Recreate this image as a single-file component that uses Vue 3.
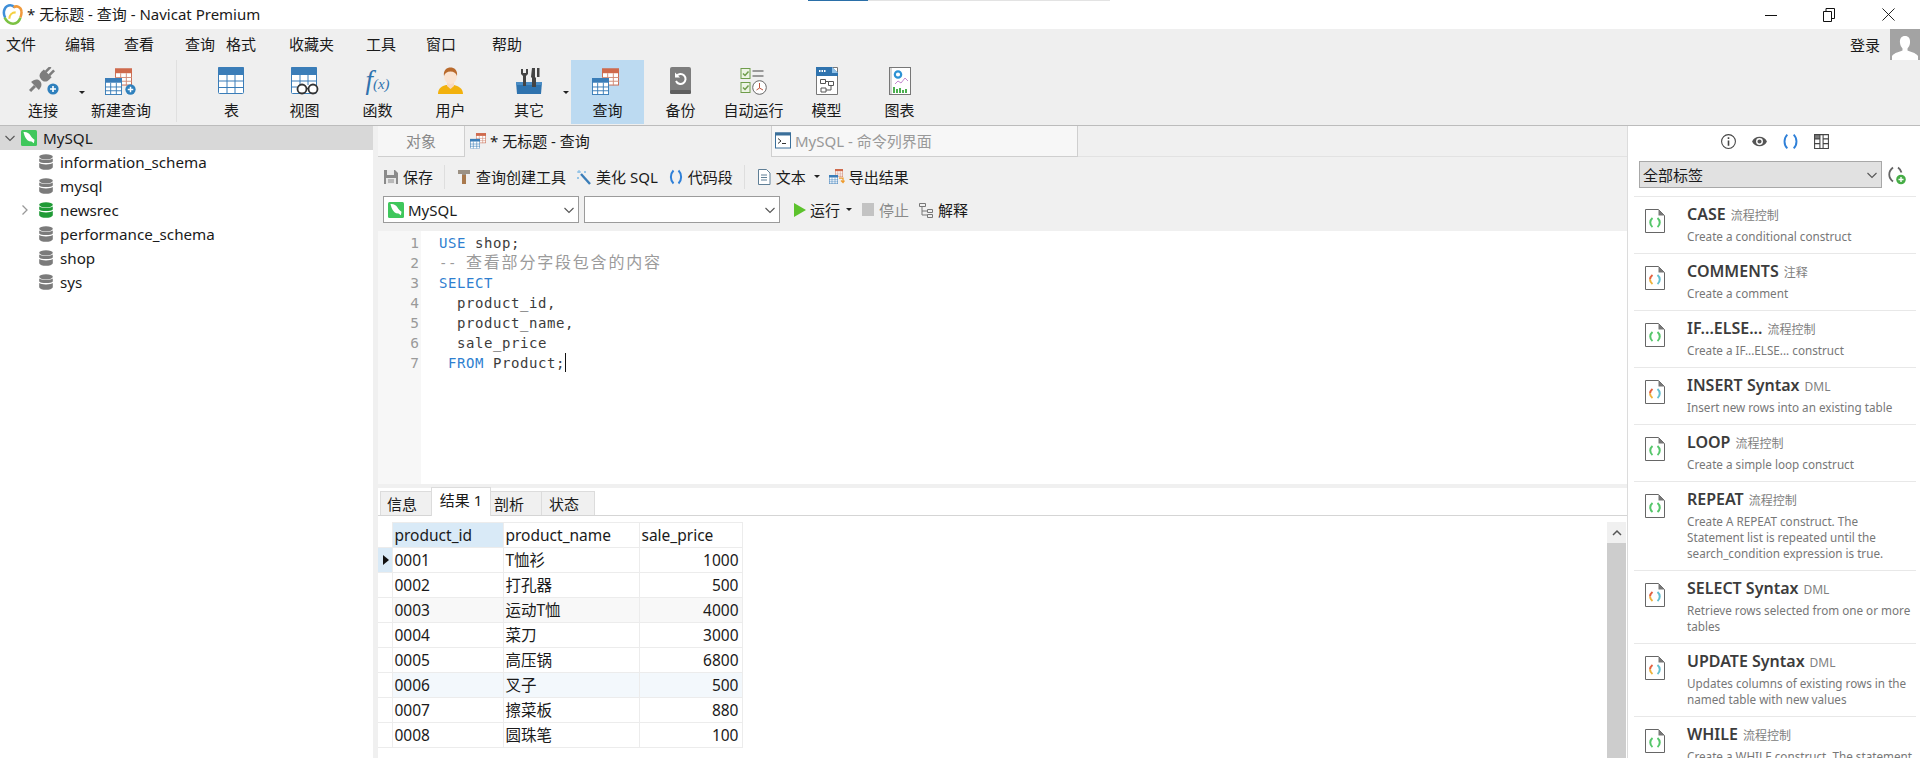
<template>
  <div class="app">
    <!-- shared icons -->
    <svg class="defs" width="0" height="0">
      <symbol id="grid-blue" viewBox="0 0 18 18">
        <rect x=".5" y=".5" width="17" height="17" fill="#fff" stroke="#3a7db8" />
        <rect width="18" height="5" fill="#3a7db8" />
        <path d="M6 5v13M12 5v13M0 9.500h18M0 13.500h18" stroke="#3a7db8" fill="none" />
      </symbol>
      <symbol id="grid-red" viewBox="0 0 18 18">
        <rect x=".5" y=".5" width="17" height="17" fill="#fff" stroke="#c9694f" />
        <rect width="18" height="5" fill="#cf6a4c" />
        <path d="M6 5v13M12 5v13M0 9.500h18M0 13.500h18" stroke="#d08a76" fill="none" />
      </symbol>
      <symbol id="plus" viewBox="0 0 12 12">
        <circle cx="6" cy="6" r="5.600" fill="#2f80bd" />
        <path d="M6 3v6M3 6h6" stroke="#fff" stroke-width="1.600" />
      </symbol>
      <symbol id="db" viewBox="0 0 14 16">
        <ellipse cx="7" cy="2.800" rx="6.800" ry="2.600" />
        <path d="M.2 4.600C1.500 6.400 12.500 6.400 13.800 4.600V7.400C12.500 9.600 1.500 9.600.2 7.400ZM.2 9C1.500 10.900 12.500 10.900 13.800 9V13.200C13 16.600 1 16.600.2 13.200Z" />
      </symbol>
      <symbol id="dolphin" viewBox="0 0 16 16">
        <rect width="16" height="16" rx="1.500" fill="#3fc75c" />
        <path d="M2.500 2c3-.4 5.500.8 7 3.400 1 1.800 2 3 4 4.400l-.6 3.400-2.400-1.600-2.300-.4C6 10.400 3.500 7 2.500 2Z" fill="#fff" />
      </symbol>
      <symbol id="snip-green" viewBox="0 0 20 24">
        <path d="M.5.500h13l6 6v17H.5Z" fill="#fff" stroke="#666" />
        <path d="M13.500.5v6h6Z" fill="#777" />
        <path d="M7.500 9c-3 2.500-3 6.500 0 9" fill="none" stroke="#55c66a" stroke-width="2" />
        <path d="M12.500 9c3 2.500 3 6.500 0 9" fill="none" stroke="#55c66a" stroke-width="2" />
      </symbol>
      <symbol id="snip-color" viewBox="0 0 20 24">
        <path d="M.5.500h13l6 6v17H.5Z" fill="#fff" stroke="#666" />
        <path d="M13.500.5v6h6Z" fill="#777" />
        <path d="M7.500 9C5.800 10.400 5 12 5 13.500" fill="none" stroke="#e2603f" stroke-width="2" />
        <path d="M5 13.500c0 1.600.8 3.200 2.500 4.500" fill="none" stroke="#eeb23a" stroke-width="2" />
        <path d="M12.500 9c3 2.500 3 6.500 0 9" fill="none" stroke="#62bfd0" stroke-width="2" />
      </symbol>
      <symbol id="conn" viewBox="0 0 32 28">
        <g transform="rotate(45 14 13)" fill="#7d7d7d">
          <rect x="10.200" y="-3" width="2.600" height="7" />
          <rect x="15.200" y="-3" width="2.600" height="7" />
          <path d="M8.500 3.500h11V7c0 3.500-2 5.500-5.500 5.500S8.500 10.500 8.500 7Z" />
          <path d="M8.500 21.500c0-4 2-7 5.500-7s5.500 3 5.500 7Z" />
          <rect x="12.500" y="21.500" width="3" height="7" />
        </g>
        <use href="#plus" x="20" y="16" width="12" height="12" />
      </symbol>
      <symbol id="newq" viewBox="0 0 32 28">
        <use href="#grid-red" x="10" y="0" width="17" height="20" />
        <use href="#grid-blue" x="0" y="11" width="17" height="17" />
        <use href="#plus" x="20" y="17" width="11" height="11" />
      </symbol>
      <symbol id="query" viewBox="0 0 32 28">
        <use href="#grid-red" x="10" y="0" width="17" height="20" />
        <use href="#grid-blue" x="0" y="11" width="17" height="17" />
      </symbol>
      <symbol id="table" viewBox="0 0 28 28">
        <rect x=".5" y=".5" width="25" height="26" rx="1" fill="#fff" stroke="#3a7db8" />
        <rect width="26" height="8" rx="1" fill="#3a7db8" />
        <path d="M9 8v19M17 8v19M0 14h26M0 20.500h26" stroke="#3a7db8" fill="none" />
      </symbol>
      <symbol id="view" viewBox="0 0 28 28">
        <rect x=".5" y=".5" width="25" height="26" rx="1" fill="#fff" stroke="#3a7db8" />
        <rect width="26" height="8" rx="1" fill="#3a7db8" />
        <path d="M9 8v10M17 8v10M0 14h26M1 20h5" stroke="#3a7db8" fill="none" />
        <circle cx="11" cy="22" r="4.500" fill="#fff" stroke="#333" stroke-width="1.800" />
        <circle cx="22" cy="22" r="4.500" fill="#fff" stroke="#333" stroke-width="1.800" />
        <path d="M15 21.500h3" stroke="#333" stroke-width="1.500" />
      </symbol>
      <symbol id="user" viewBox="0 0 28 28">
        <path d="M1 27c0-6 4-8 8-9h8c4 1 9 3 9 9Z" fill="#f2b10d" />
        <path d="M10 14h7v5l-3.500 3L10 19Z" fill="#f8d9c2" />
        <ellipse cx="13.500" cy="9" rx="6.500" ry="8" fill="#fae3d1" />
        <path d="M7 9C6 3 10 .5 13.500 .5S21 3 20 9c-1-3-3-4.500-6.500-4.500S8 6 7 9Z" fill="#b96a2c" />
      </symbol>
      <symbol id="tools" viewBox="0 0 28 28">
        <path d="M1 15h26l-1 12H2Z" fill="#2f73ae" />
        <path d="M1 15h26v3H1Z" fill="#4a8cc4" />
        <path d="M6 2v5l2 2v10h3V9l2-2V2h-2v4H8V2Z" fill="#444" />
        <path d="M17 1h3v9l1 1v9h-4v-9l-1-1ZM22 1h2.500v9H22Z" fill="#444" />
      </symbol>
      <symbol id="backup" viewBox="0 0 28 28">
        <rect x="3" width="21" height="27" rx="2" fill="#7d7d7d" />
        <rect x="3" y="23" width="21" height="4" rx="1.500" fill="#5f5f5f" />
        <path d="M9.500 9a5 5 0 1 1-.5 5" fill="none" stroke="#fff" stroke-width="2" />
        <path d="M8 5.500v5h5Z" fill="#fff" />
      </symbol>
      <symbol id="auto" viewBox="0 0 28 28">
        <rect x="1" y="1.500" width="9" height="10" fill="#edf4e5" stroke="#6f9d4b" />
        <rect x="1" y="15.500" width="9" height="10" fill="#edf4e5" stroke="#6f9d4b" />
        <path d="M3 6.500l2 2 3.500-4M3 20.500l2 2 3.500-4" fill="none" stroke="#6f9d4b" stroke-width="1.500" />
        <path d="M12.500 4h11M12.500 9h11" stroke="#999" stroke-width="2" />
        <circle cx="19.500" cy="20.500" r="6.800" fill="#fff" stroke="#666" />
        <path d="M19.500 16v5l3.500 2M19.500 21l-3 2" fill="none" stroke="#c0543c" />
      </symbol>
      <symbol id="model" viewBox="0 0 28 28">
        <path d="M3.500.5h21v27h-21Z" fill="#fff" stroke="#777" />
        <path d="M3 0h16l6 6v3H3Z" fill="#2f73ae" />
        <path d="M19 0l6 6h-6Z" fill="#8fc1e8" />
        <path d="M6 4h1.500M8.500 4H10M11 4h1.500" stroke="#fff" stroke-width="2" />
        <path d="M7.500 12.500h5v4h-5ZM15.500 14.500h5v4h-5ZM8 21h5v4H8ZM12.500 14.500h3M18 18.500v4.500h-5" fill="none" stroke="#555" />
      </symbol>
      <symbol id="chart" viewBox="0 0 28 28">
        <rect x="3.500" y=".5" width="21" height="27" fill="#fff" stroke="#777" />
        <path d="M5 1v26" stroke="#aaa" />
        <circle cx="12" cy="7.500" r="3.200" fill="none" stroke="#2d93d5" stroke-width="2.200" />
        <path d="M9 17l3-3 3 2 4-5 3 3" fill="none" stroke="#c587cf" />
        <path d="M8 20v6M11 22v4M14 21v5M17 23v3M20 22v4" stroke="#4caf50" stroke-width="2" />
      </symbol>
      <symbol id="chev" viewBox="0 0 12 12">
        <path d="M1.500 4l4.500 4.500L10.500 4" fill="none" stroke="#555" stroke-width="1.100" />
      </symbol>
    </svg>

    <!-- title bar -->
    <header class="titlebar">
      <div class="loader"><i></i></div>
      <svg class="logo" viewBox="0 0 20 20">
        <path d="M3 13C0 7 3 1.300 8 1.300c1.800 0 3 .7 4 2" fill="none" stroke="#3f8fd8" stroke-width="2.400" />
        <path d="M11 3.300c3-2.300 7-.5 7.500 3.500.3 2-.2 4.200-1 6" fill="none" stroke="#f09a3c" stroke-width="2.400" />
        <path d="M2.500 13c2 4 5 5.700 8 5.700s6-2.200 7-5.700" fill="none" stroke="#7cc243" stroke-width="2.400" />
        <path d="M7 14c0-3.500 2.500-6 6-6" fill="none" stroke="#f5d040" stroke-width="2" />
      </svg>
      <span class="title">* 无标题 - 查询 - Navicat Premium</span>
      <div class="winbtns">
        <svg class="win win-min" viewBox="0 0 12 12"><path d="M0 6.500h12" stroke="#111" /></svg>
        <svg class="win win-max" viewBox="0 0 12 14"><path d="M.5 3.500h8v10h-8ZM3 3.500V.5h8.500v10H8.500" fill="none" stroke="#111" /></svg>
        <svg class="win win-close" viewBox="0 0 14 14"><path d="M.5.500l13 13M13.500.5l-13 13" stroke="#111" /></svg>
      </div>
    </header>

    <!-- menu -->
    <nav class="menubar">
      <span v-for="m in menus" :key="m.t" class="menu" :style="{ width: m.w + 'px' }">{{ m.t }}</span>
      <span class="login">登录</span>
      <svg class="avatar" viewBox="0 0 30 31">
        <rect width="30" height="31" fill="#a3a3a3" />
        <path d="M15 7c3.500 0 5.500 2.500 5 7-.3 2.500-1.300 4-2.500 5.500v2c3 1.500 8 2 10.500 5.500v4H2v-4c2.500-3.500 7.500-4 10.500-5.500v-2C11.300 18 10.300 16.500 10 14c-.5-4.500 1.500-7 5-7Z" fill="#fff" />
      </svg>
    </nav>

    <!-- main toolbar -->
    <div class="toolbar">
      <template v-for="b in tools" :key="b.t">
        <div class="tb-btn" :class="{ active: b.active }" :style="{ width: b.w + 'px' }">
          <span v-if="b.icon === 'fx'" class="fx">f<em>(x)</em></span>
          <svg v-else class="tb-icon" :class="{ wide: b.wide }" :viewBox="b.wide ? '0 0 32 28' : '0 0 28 28'"><use :href="'#' + b.icon" /></svg>
          <span class="tb-label">{{ b.t }}</span>
          <i v-if="b.caret" class="caret tb-caret" :style="{ right: b.caret + 'px' }"></i>
        </div>
        <div v-if="b.sep" class="tb-sep"></div>
      </template>
    </div>

    <div class="body">
      <!-- connection tree -->
      <aside class="tree">
        <div class="tree-row conn">
          <svg class="tree-arrow" viewBox="0 0 12 12"><use href="#chev" /></svg>
          <svg class="tree-conn" viewBox="0 0 16 16"><use href="#dolphin" /></svg>
          <span>MySQL</span>
        </div>
        <div v-for="d in databases" :key="d.name" class="tree-row">
          <svg v-if="d.open" class="tree-more" viewBox="0 0 8 12"><path d="M1.500 1.500L6 6l-4.500 4.500" fill="none" stroke="#999" stroke-width="1.300" /></svg>
          <svg class="tree-db" :class="{ open: d.open }" viewBox="0 0 14 16"><use href="#db" /></svg>
          <span>{{ d.name }}</span>
        </div>
      </aside>

      <main class="main">
        <div class="tabs">
          <div class="tab tab-obj">对象</div>
          <div class="tab tab-active">
            <svg class="tab-icon" viewBox="0 0 27 28"><use href="#query" width="32" height="28" /></svg>
            <span>* 无标题 - 查询</span>
          </div>
          <div class="tab tab-cmd">
            <svg class="tab-icon" viewBox="0 0 16 16">
              <rect x=".5" y=".5" width="15" height="15" fill="#fff" stroke="#3a6f9a" />
              <rect width="16" height="3" fill="#3a6f9a" />
              <path d="M3 6l3 2.500L3 11M7 11h4" fill="none" stroke="#333" />
            </svg>
            <span>MySQL - 命令列界面</span>
          </div>
          <div class="tab-rest"></div>
        </div>

        <div class="qbar">
          <span class="tool">
            <svg class="ico" viewBox="0 0 16 16"><path d="M1 1h11l3 3v11H1Z" fill="#8a8a8a" /><path d="M4 1h7v5H4Z" fill="#e9e9e9" /><path d="M3 9h10v6H3Z" fill="#e9e9e9" /><path d="M5 11h6M5 13h6" stroke="#888" /></svg>
            保存
          </span>
          <i class="qsep"></i>
          <span class="tool">
            <svg class="ico" viewBox="0 0 16 16"><path d="M2 1h12v4H10v10H6V5H2Z" fill="#9c9184" /><path d="M6 6h4v9H6Z" fill="#a9794d" /></svg>
            查询创建工具
          </span>
          <span class="tool tool-wand">
            <svg class="ico" viewBox="0 0 16 16"><path d="M5 5l9 10" stroke="#3a7db8" stroke-width="2.400" /><path d="M3 1v3M1 3h4M9 2v2M8 3h2M2 8v2M1 9h2" stroke="#79b6e4" /></svg>
            美化 SQL
          </span>
          <span class="tool tool-snip">
            <svg class="ico" viewBox="0 0 16 16"><path d="M5.500 1.500c-3.500 3.500-3.500 9.500 0 13M10.500 1.500c3.500 3.500 3.500 9.500 0 13" fill="none" stroke="#2f80d8" stroke-width="2" /></svg>
            代码段
          </span>
          <i class="qsep"></i>
          <span class="tool">
            <svg class="ico" viewBox="0 0 16 16"><path d="M2.500.5h8l3.500 3.500v11.500H2.500Z" fill="#fff" stroke="#5f7f96" /><path d="M5 6h6M5 8.500h6M5 11h6" stroke="#5f7f96" /></svg>
            文本
            <i class="caret"></i>
          </span>
          <span class="tool">
            <svg class="ico" viewBox="0 0 32 32"><use href="#grid-red" x="12" width="16" height="16" /><use href="#grid-blue" y="12" width="18" height="18" /><path d="M20 18h8v8m-4-3l4 4 3-4" fill="none" stroke="#ee9b2d" stroke-width="2.500" /></svg>
            导出结果
          </span>
        </div>

        <div class="runbar">
          <div class="combo">
            <svg class="combo-icon" viewBox="0 0 16 16"><use href="#dolphin" /></svg>
            <span>MySQL</span>
            <svg class="chev" viewBox="0 0 12 12"><use href="#chev" /></svg>
          </div>
          <div class="combo">
            <span></span>
            <svg class="chev" viewBox="0 0 12 12"><use href="#chev" /></svg>
          </div>
          <span class="tool run">
            <svg class="ico" viewBox="0 0 16 16"><path d="M2 1l12 7-12 7Z" fill="#5cc22c" /></svg>
            运行
            <i class="caret"></i>
          </span>
          <span class="tool stop">
            <i class="stop-box"></i>
            停止
          </span>
          <span class="tool">
            <svg class="ico" viewBox="0 0 16 16"><path d="M1.500 1.500h6v3h-6ZM9.500 7.500h5v3h-5ZM9.500 12.500h5v3h-5ZM4 4.500v8.500h5.500M4 9h5.500" fill="none" stroke="#777" /></svg>
            解释
          </span>
        </div>

        <!-- sql editor -->
        <section class="editor">
          <div class="gutter"><div v-for="n in 7" :key="n">{{ n }}</div></div>
          <pre class="code"><b>USE</b> shop;
<span class="cmt">-- <span class="cjk">查看部分字段包含的内容</span></span>
<b>SELECT</b>
  product_id,
  product_name,
  sale_price
 <b>FROM</b> Product;<i class="cursor"></i></pre>
        </section>

        <div class="band"></div>

        <div class="rtabs">
          <span class="rtab rt-info">信息</span>
          <span class="rtab on">结果 1</span>
          <span class="rtab rt-prof">剖析</span>
          <span class="rtab rt-stat">状态</span>
        </div>

        <!-- result grid -->
        <section class="results">
          <div class="grid-wrap">
            <table class="grid">
              <thead>
                <tr>
                  <th class="ind-head"></th>
                  <th class="col-id">product_id</th>
                  <th class="col-name">product_name</th>
                  <th class="col-price">sale_price</th>
                </tr>
              </thead>
              <tbody>
                <tr v-for="(r, i) in rows" :key="r.id" :class="r.tint">
                  <td class="ind" :class="{ cur: i === 0 }"><i v-if="i === 0"></i></td>
                  <td>{{ r.id }}</td>
                  <td>{{ r.name }}</td>
                  <td class="num">{{ r.price }}</td>
                </tr>
              </tbody>
            </table>
          </div>
          <div class="scroll">
            <div class="scroll-up"><svg viewBox="0 0 10 7"><path d="M1 6l4-4 4 4" fill="none" stroke="#555" stroke-width="1.500" /></svg></div>
            <div class="scroll-thumb"></div>
          </div>
        </section>
      </main>

      <!-- snippets panel -->
      <aside class="panel">
        <div class="panel-icons">
          <svg viewBox="0 0 16 16"><circle cx="8" cy="8" r="6.500" fill="none" stroke="#444" /><path d="M8 7v5M8 4v1.600" stroke="#444" stroke-width="1.500" /></svg>
          <svg viewBox="0 0 16 16"><path d="M1 8c2-6 12-6 14 0-2 6-12 6-14 0Z" fill="#555" /><circle cx="8" cy="8" r="2.600" fill="none" stroke="#fff" stroke-width="1.300" /></svg>
          <svg viewBox="0 0 16 16"><path d="M5 1.500c-3.500 3.500-3.500 9.500 0 13M11 1.500c3.500 3.500 3.500 9.500 0 13" fill="none" stroke="#2f80d8" stroke-width="1.800" /></svg>
          <svg viewBox="0 0 16 16"><path d="M1.500 1.500h13v13h-13Z" fill="#fff" stroke="#444" /><path d="M1 5.500h5.500M9.500 5.500H15M1 10h5.500M9.500 10H15M6.500 1v14M9.500 1v14" stroke="#444" /><path d="M1 1h5.500v4.500H1Z" fill="#444" opacity=".7" /></svg>
        </div>
        <div class="tag-row">
          <div class="tag-select">
            <span>全部标签</span>
            <svg class="chev" viewBox="0 0 12 12"><use href="#chev" /></svg>
          </div>
          <svg class="tag-add" viewBox="0 0 20 20">
            <path d="M6 2.500c-5 4-5 10 0 14M11 2.500c2 1.500 3 3 3.500 5" fill="none" stroke="#666" stroke-width="1.800" />
            <circle cx="14" cy="14.500" r="4.800" fill="#46ad46" />
            <path d="M14 12v5M11.500 14.500h5" stroke="#fff" stroke-width="1.400" />
          </svg>
        </div>
        <div class="snips">
          <div v-for="s in snippets" :key="s.title" class="snip">
            <svg class="snip-icon" viewBox="0 0 20 24"><use :href="s.tag === '流程控制' ? '#snip-green' : '#snip-color'" /></svg>
            <div class="snip-text">
              <div class="snip-head"><b>{{ s.title }}</b><small>{{ s.tag }}</small></div>
              <p>{{ s.desc }}</p>
            </div>
          </div>
        </div>
      </aside>
    </div>
  </div>
</template>

<script setup>
const menus = [
  { t: '文件', w: 59 }, { t: '编辑', w: 59 }, { t: '查看', w: 61 },
  { t: '查询', w: 41 }, { t: '格式', w: 63 }, { t: '收藏夹', w: 77 },
  { t: '工具', w: 60 }, { t: '窗口', w: 66 }, { t: '帮助', w: 60 },
]

const tools = [
  { t: '连接', icon: 'conn', w: 86, wide: true, caret: 1 },
  { t: '新建查询', icon: 'newq', w: 70, wide: true, sep: true },
  { t: '表', icon: 'table', w: 73 },
  { t: '视图', icon: 'view', w: 73 },
  { t: '函数', icon: 'fx', w: 73 },
  { t: '用户', icon: 'user', w: 73 },
  { t: '其它', icon: 'tools', w: 84, caret: 2 },
  { t: '查询', icon: 'query', w: 73, wide: true, active: true },
  { t: '备份', icon: 'backup', w: 73 },
  { t: '自动运行', icon: 'auto', w: 73 },
  { t: '模型', icon: 'model', w: 73 },
  { t: '图表', icon: 'chart', w: 73 },
]

const databases = [
  { name: 'information_schema' },
  { name: 'mysql' },
  { name: 'newsrec', open: true },
  { name: 'performance_schema' },
  { name: 'shop' },
  { name: 'sys' },
]

const rows = [
  { id: '0001', name: 'T恤衫', price: 1000 },
  { id: '0002', name: '打孔器', price: 500 },
  { id: '0003', name: '运动T恤', price: 4000, tint: 'gray' },
  { id: '0004', name: '菜刀', price: 3000 },
  { id: '0005', name: '高压锅', price: 6800 },
  { id: '0006', name: '叉子', price: 500, tint: 'blue' },
  { id: '0007', name: '擦菜板', price: 880 },
  { id: '0008', name: '圆珠笔', price: 100 },
]

const snippets = [
  { title: 'CASE', tag: '流程控制', desc: 'Create a conditional construct' },
  { title: 'COMMENTS', tag: '注释', desc: 'Create a comment' },
  { title: 'IF...ELSE...', tag: '流程控制', desc: 'Create a IF...ELSE... construct' },
  { title: 'INSERT Syntax', tag: 'DML', desc: 'Insert new rows into an existing table' },
  { title: 'LOOP', tag: '流程控制', desc: 'Create a simple loop construct' },
  { title: 'REPEAT', tag: '流程控制', desc: 'Create A REPEAT construct. The Statement list is repeated until the search_condition expression is true.' },
  { title: 'SELECT Syntax', tag: 'DML', desc: 'Retrieve rows selected from one or more tables' },
  { title: 'UPDATE Syntax', tag: 'DML', desc: 'Updates columns of existing rows in the named table with new values' },
  { title: 'WHILE', tag: '流程控制', desc: 'Create a WHILE construct. The statement' },
]
</script>

<style>
html, body {
  margin: 0;
  overflow: hidden;
  background: #fff;
}
</style>

<style scoped>
.app {
  width: 1920px;
  height: 758px;
  display: flex;
  flex-direction: column;
  overflow: hidden;
  font-family: "Noto Sans", "Noto Sans CJK SC", sans-serif;
  font-size: 15px;
  color: #1a1a1a;
}

.defs {
  position: absolute;
}

/* title bar */
.titlebar {
  height: 29px;
  display: flex;
  align-items: center;
  position: relative;
  padding-left: 2px;
  flex: none;
}

.loader {
  position: absolute;
  left: 808px;
  top: 0;
  width: 302px;
  height: 1px;
  background: #e3e3e3;
}

.loader i {
  display: block;
  width: 60px;
  height: 1px;
  background: #2a6fa8;
}

.logo {
  width: 21px;
  height: 21px;
}

.title {
  margin-left: 4px;
  line-height: 29px;
}

.winbtns {
  margin-left: auto;
  display: flex;
  align-items: center;
  height: 29px;
}

.win {
  display: block;
}

.win-min {
  width: 12px;
  height: 12px;
  margin-right: 46px;
}

.win-max {
  width: 12px;
  height: 14px;
  margin-right: 47px;
}

.win-close {
  width: 13px;
  height: 13px;
  margin-right: 25px;
}

/* menu */
.menubar {
  height: 31px;
  flex: none;
  background: #efefef;
  display: flex;
  align-items: center;
  padding-left: 6px;
}

.menu {
  flex: none;
  line-height: 31px;
}

.login {
  margin-left: auto;
  margin-right: 10px;
}

.avatar {
  width: 30px;
  height: 31px;
  display: block;
}

/* toolbar */
.toolbar {
  height: 65px;
  flex: none;
  background: #efefef;
  border-bottom: 1px solid #bcbcbc;
  display: flex;
}

.tb-btn {
  position: relative;
  height: 64px;
  flex: none;
  display: flex;
  flex-direction: column;
  align-items: center;
}

.tb-btn.active {
  background: #bcdaf1;
}

.tb-icon {
  width: 28px;
  height: 28px;
  margin-top: 7px;
  display: block;
}

.tb-icon.wide {
  width: 32px;
}

.fx {
  height: 28px;
  margin-top: 7px;
  font-family: "Liberation Serif", serif;
  font-style: italic;
  font-size: 27px;
  line-height: 26px;
  color: #2f73ae;
}

.fx em {
  font-size: 15px;
}

.tb-label {
  line-height: 20px;
  margin-top: 5px;
  white-space: nowrap;
}

.tb-sep {
  flex: none;
  width: 1px;
  height: 62px;
  margin: 0 18px 0 20px;
  background: #e0e0e0;
}

.caret {
  display: inline-block;
  width: 0;
  height: 0;
  border-left: 3px solid transparent;
  border-right: 3px solid transparent;
  border-top: 3px solid #222;
}

.tb-caret {
  position: absolute;
  top: 31px;
}

/* layout */
.body {
  flex: 1;
  min-height: 0;
  display: flex;
}

.tree {
  width: 373px;
  flex: none;
  border-right: 5px solid #f0f0f0;
  background: #fff;
  font-size: 15.2px;
}

.tree-row {
  height: 24px;
  display: flex;
  align-items: center;
  position: relative;
  padding-left: 39px;
  line-height: 24px;
}

.tree-row span {
  margin-left: 7px;
}

.tree-row.conn {
  background: #d8d8d8;
  padding-left: 4px;
}

.tree-arrow {
  width: 12px;
  height: 12px;
}

.tree-conn {
  width: 16px;
  height: 16px;
  margin-left: 5px;
}

.tree-row.conn span {
  margin-left: 6px;
}

.tree-more {
  position: absolute;
  left: 21px;
  top: 6px;
  width: 8px;
  height: 12px;
}

.tree-db {
  width: 14px;
  height: 16px;
  fill: #7b7b7b;
  flex: none;
}

.tree-db.open {
  fill: #1f9a36;
}

/* main */
.main {
  flex: 1;
  min-width: 0;
  display: flex;
  flex-direction: column;
  background: #f0f0f0;
  border-right: 1px solid #dcdcdc;
  margin-right: 2px;
}

.tabs {
  height: 31px;
  flex: none;
  display: flex;
}

.tab {
  flex: none;
  display: flex;
  align-items: center;
  box-sizing: border-box;
  border-bottom: 1px solid #cfcfcf;
  padding-bottom: 2px;
}

.tab-obj {
  width: 87px;
  justify-content: center;
  background: #f6f6f6;
  color: #888;
  border-right: 1px solid #cfcfcf;
}

.tab-active {
  width: 306px;
  padding-left: 5px;
  border-bottom: none;
}

.tab-cmd {
  width: 307px;
  padding-left: 3px;
  background: #f7f7f7;
  color: #999;
  border-left: 1px solid #cfcfcf;
  border-right: 1px solid #cfcfcf;
}

.tab-rest {
  flex: 1;
  border-bottom: 1px solid #e2e2e2;
}

.tab-icon {
  width: 16px;
  height: 17px;
  margin-right: 4px;
}

.qbar {
  height: 39px;
  flex: none;
  display: flex;
  align-items: center;
  padding-left: 5px;
  gap: 9px;
}

.tool {
  display: flex;
  align-items: center;
  gap: 4px;
  white-space: nowrap;
  flex: none;
}

.tool-wand {
  margin-left: 1px;
}

.tool-snip {
  margin-left: 1px;
}

.ico {
  width: 16px;
  height: 16px;
  flex: none;
}

.qsep {
  width: 1px;
  height: 24px;
  margin: 0 2px;
  background: #dedede;
}

.tool .caret {
  margin-left: 4px;
}

.runbar {
  height: 35px;
  flex: none;
  display: flex;
  align-items: flex-start;
  padding-left: 5px;
}

.combo {
  width: 196px;
  height: 27px;
  box-sizing: border-box;
  margin-right: 5px;
  flex: none;
  display: flex;
  align-items: center;
  background: #fff;
  border: 1px solid #9b9b9b;
  padding-left: 4px;
}

.combo-icon {
  width: 16px;
  height: 16px;
  margin-right: 4px;
}

.chev {
  width: 12px;
  height: 12px;
  margin-left: auto;
  margin-right: 3px;
}

.runbar .tool {
  height: 27px;
}

.run {
  margin-left: 7px;
  gap: 2px;
}

.stop {
  margin-left: 10px;
  gap: 5px;
  color: #8a8a8a;
}

.stop-box {
  width: 12px;
  height: 13px;
  background: #c3c3c3;
}

.runbar .tool:last-child {
  margin-left: 9px;
}

/* editor */
.editor {
  height: 253px;
  flex: none;
  display: flex;
  background: #fff;
}

.gutter {
  width: 43px;
  flex: none;
  background: #f7f7f7;
  padding-top: 2px;
  text-align: right;
  font-family: "DejaVu Sans Mono", monospace;
  font-size: 14.5px;
  line-height: 20px;
  color: #9a9a9a;
  padding-right: 2px;
  box-sizing: border-box;
}

.code {
  margin: 0;
  padding: 2px 0 0 18px;
  font-family: "DejaVu Sans Mono", "Noto Sans CJK SC", monospace;
  font-size: 14px;
  letter-spacing: .57px;
  line-height: 20px;
  color: #3c3c3c;
}

.code b {
  font-weight: normal;
  color: #2f7fd0;
}

.cmt {
  color: #9b9b9b;
}

.cjk {
  font-size: 16px;
  letter-spacing: 1.8px;
}

.cursor {
  display: inline-block;
  width: 1px;
  height: 19px;
  background: #111;
  vertical-align: -4px;
}

.band {
  height: 4px;
  flex: none;
}

/* result tabs */
.rtabs {
  height: 28px;
  flex: none;
  display: flex;
  align-items: flex-end;
  box-sizing: border-box;
  background: #fff;
  border-bottom: 1px solid #d5d5d5;
  padding-left: 2px;
}

.rtab {
  height: 24px;
  box-sizing: border-box;
  border: 1px solid #dcdcdc;
  border-bottom: none;
  background: #f0f0f0;
  display: flex;
  align-items: center;
  margin-left: -1px;
  width: 52px;
}

.rtab:first-child {
  margin-left: 0;
}

.rt-info {
  padding-left: 6px;
}

.rt-prof {
  padding-left: 3px;
}

.rt-stat {
  width: 54px;
  padding-left: 7px;
}

.rtab.on {
  width: 60px;
  height: 29px;
  margin-bottom: -1px;
  background: #fff;
  justify-content: center;
  padding-bottom: 5px;
}

/* result grid */
.results {
  flex: 1;
  min-height: 0;
  display: flex;
  background: #fff;
}

.grid-wrap {
  flex: 1;
  padding-top: 6px;
}

.grid {
  border-collapse: collapse;
  table-layout: fixed;
  width: 364px;
  font-size: 15.5px;
}

.grid th,
.grid td {
  height: 25px;
  padding: 0 2px;
  box-sizing: border-box;
  border: 1px solid #ececec;
  font-weight: normal;
  text-align: left;
  white-space: nowrap;
  line-height: 22px;
}

.ind-head {
  width: 14px;
  border-top: none !important;
  border-left: none !important;
}

.col-id {
  width: 111px;
  background: #d9eaf7;
}

.col-name {
  width: 136px;
}

.col-price {
  width: 103px;
}

.grid td.ind {
  padding: 0;
  border-left: none;
  position: relative;
  background: #fff;
}

.grid td.ind.cur {
  background: #d9eaf7;
}

.ind i {
  position: absolute;
  left: 5px;
  top: 7px;
  border-top: 5px solid transparent;
  border-bottom: 5px solid transparent;
  border-left: 6px solid #111;
}

.grid td.num {
  text-align: right;
  padding-right: 3px;
}

.grid .gray td:not(.ind) {
  background: #f8f8f8;
}

.grid .blue td:not(.ind) {
  background: #f3f8fc;
}

.scroll {
  width: 19px;
  flex: none;
  margin: 6px 1px 0 0;
  display: flex;
  flex-direction: column;
}

.scroll-up {
  height: 21px;
  background: #f0f0f0;
  display: flex;
  align-items: center;
  justify-content: center;
}

.scroll-up svg {
  width: 10px;
  height: 7px;
}

.scroll-thumb {
  flex: 1;
  background: #cdcdcd;
}

/* snippet panel */
.panel {
  width: 290px;
  flex: none;
  background: #fff;
  overflow: hidden;
}

.panel-icons {
  height: 35px;
  box-sizing: border-box;
  padding-bottom: 5px;
  display: flex;
  justify-content: center;
  align-items: center;
  gap: 14px;
}

.panel-icons svg {
  width: 17px;
  height: 17px;
}

.tag-row {
  display: flex;
  align-items: center;
  padding-left: 9px;
  height: 27px;
}

.tag-select {
  width: 243px;
  height: 27px;
  box-sizing: border-box;
  background: #e1e1e1;
  border: 1px solid #a8a8a8;
  display: flex;
  align-items: center;
  padding-left: 3px;
  flex: none;
}

.tag-add {
  width: 20px;
  height: 20px;
  margin-left: 5px;
}

.snips {
  margin: 8px 4px 0;
}

.snip {
  display: flex;
  border-top: 1px solid #e8e8e8;
  padding: 12px 0 0 11px;
  box-sizing: border-box;
}

.snip-icon {
  width: 20px;
  height: 24px;
  flex: none;
}

.snip-text {
  margin-left: 22px;
  padding-bottom: 9px;
  margin-top: -6px;
  width: 232px;
}

.snip-head {
  height: 25px;
  line-height: 23px;
  white-space: nowrap;
}

.snip-head b {
  font-size: 16px;
  font-weight: 600;
  color: #3c3c3c;
}

.snip-head small {
  font-size: 12px;
  color: #808080;
  margin-left: 5px;
}

.snip-text p {
  margin: 0;
  font-size: 11.7px;
  line-height: 16px;
  color: #777;
}
</style>
